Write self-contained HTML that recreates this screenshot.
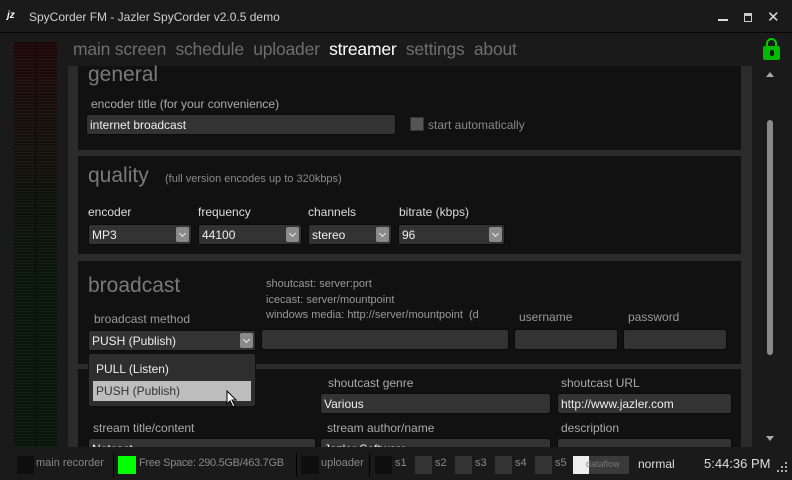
<!DOCTYPE html>
<html><head><meta charset="utf-8"><style>
*{margin:0;padding:0;box-sizing:border-box}
body{width:792px;height:480px;background:#1a1a1a;font-family:"Liberation Sans","DejaVu Sans",sans-serif;position:relative;overflow:hidden;color:#ccc}
.a{position:absolute;white-space:nowrap}
.lbl{font-size:12px;color:#b8b8b8}
.dim{font-size:11px;color:#8a8a8a}
.h{font-size:21px;color:#7a7a7a}
.in{position:absolute;background:#333;border:1px solid #0a0a0a;border-radius:3px;font-size:12px;color:#eee;padding:3px 0 0 3px;height:21px}
.sel{position:absolute;background:#333;border:1px solid #0a0a0a;border-radius:3px;font-size:12px;color:#eee;padding:3px 0 0 3px;height:21px}
.sel i{position:absolute;right:2px;top:2px;width:13px;height:15px;background:#8a8a8a;border-radius:2px}
.sel i:after{content:"";position:absolute;left:4px;top:4px;width:4px;height:4px;border-right:1.5px solid #eee;border-bottom:1.5px solid #eee;transform:rotate(45deg)}
.sec{position:absolute;left:78px;width:663px;background:#111}
.st{position:absolute;top:456px;height:18px;background:#0e0e0e}
.sl{position:absolute;top:457px;font-size:11px;color:#888}
</style></head><body>
<div class="a" style="left:0;top:32px;width:792px;height:1px;background:#050505"></div>
<div class="a" style="left:7px;top:10px;font-size:10px;font-weight:bold;font-style:italic;color:#fff">jz</div>
<div class="a" style="left:29px;top:10px;font-size:12px;color:#cfcfcf">SpyCorder FM - Jazler SpyCorder v2.0.5 demo</div>
<div class="a" style="left:718px;top:19px;width:10px;height:2px;background:#ddd"></div>
<div class="a" style="left:744px;top:13px;width:8px;height:9px;border:1.5px solid #ccc;border-top-width:3px"></div>
<div class="a" style="left:767px;top:8px;font-size:15px;color:#ddd">✕</div>
<div class="a" style="left:14px;top:42px;width:43px;height:405px;background:repeating-linear-gradient(#0d0d0d 0 2px,#1b1b1b 2px 3px),#111"></div>
<div class="a" style="left:14px;top:42px;width:43px;height:405px;background:linear-gradient(rgba(60,0,0,.35),rgba(40,30,0,.25) 25%,rgba(0,40,0,.3) 60%,rgba(0,40,0,.3));"></div>
<div class="a" style="left:35px;top:42px;width:1px;height:405px;background:#0a0a0a"></div>
<div class="a" style="left:73px;top:39px;font-size:17.5px;color:#6e6e6e;letter-spacing:-0.2px">main screen&nbsp; schedule&nbsp; uploader&nbsp; <span style="color:#fff">streamer</span>&nbsp; settings&nbsp; about</div>
<div class="a" style="left:766px;top:38px;width:11px;height:10px;border:2px solid #0c0;border-bottom:none;border-radius:6px 6px 0 0"></div>
<div class="a" style="left:763px;top:46px;width:17px;height:14px;background:#0b0;border-radius:2px"></div>
<div class="a" style="left:770px;top:50px;width:4px;height:6px;background:#111;border-radius:2px"></div>
<div class="a" style="left:766px;top:72px;width:0;height:0;border:4px solid transparent;border-bottom:5px solid #aaa;border-top:none"></div>
<div class="a" style="left:767px;top:120px;width:6px;height:235px;background:#8a8a8a;border-radius:3px"></div>
<div class="a" style="left:766px;top:436px;width:0;height:0;border:4px solid transparent;border-top:5px solid #aaa;border-bottom:none"></div>
<div class="a" style="left:68px;top:66px;width:684px;height:381px;background:#2b2b2b"></div>
<div class="sec" style="top:66px;height:84px"></div>
<div class="sec" style="top:156px;height:98px"></div>
<div class="sec" style="top:261px;height:103px"></div>
<div class="sec" style="top:369px;height:78px"></div>
<div class="a h" style="left:88px;top:63px">general</div>
<div class="a lbl" style="left:91px;top:97px;color:#aaa">encoder title (for your convenience)</div>
<div class="in" style="left:86px;top:114px;width:310px">internet broadcast</div>
<div class="a" style="left:410px;top:117px;width:14px;height:14px;background:#555;border:1px solid #333"></div>
<div class="a lbl" style="left:428px;top:118px;color:#888">start automatically</div>
<div class="a h" style="left:88px;top:164px">quality</div>
<div class="a dim" style="left:165px;top:173px">(full version encodes up to 320kbps)</div>
<div class="a lbl" style="left:88px;top:205px;color:#ddd">encoder</div>
<div class="a lbl" style="left:198px;top:205px;color:#ddd">frequency</div>
<div class="a lbl" style="left:308px;top:205px;color:#ddd">channels</div>
<div class="a lbl" style="left:399px;top:205px;color:#ddd">bitrate (kbps)</div>
<div class="sel" style="left:88px;top:224px;width:104px">MP3<i></i></div>
<div class="sel" style="left:198px;top:224px;width:104px">44100<i></i></div>
<div class="sel" style="left:308px;top:224px;width:84px">stereo<i></i></div>
<div class="sel" style="left:398px;top:224px;width:107px">96<i></i></div>
<div class="a h" style="left:88px;top:274px">broadcast</div>
<div class="a lbl" style="left:94px;top:312px;color:#999">broadcast method</div>
<div class="a dim" style="left:266px;top:277px;font-size:11px;line-height:15.5px;color:#999">shoutcast: server:port<br>icecast: server/mountpoint<br>windows media: http://server/mountpoint &nbsp;(d</div>
<div class="a lbl" style="left:519px;top:310px;color:#999">username</div>
<div class="a lbl" style="left:628px;top:310px;color:#999">password</div>
<div class="sel" style="left:88px;top:330px;width:168px">PUSH (Publish)<i></i></div>
<div class="in" style="left:261px;top:329px;width:248px"></div>
<div class="in" style="left:514px;top:329px;width:104px"></div>
<div class="in" style="left:623px;top:329px;width:104px"></div>
<div class="a lbl" style="left:328px;top:376px;color:#aaa">shoutcast genre</div>
<div class="a lbl" style="left:561px;top:376px;color:#aaa">shoutcast URL</div>
<div class="in" style="left:320px;top:393px;width:231px">Various</div>
<div class="in" style="left:557px;top:393px;width:175px">http://www.jazler.com</div>
<div class="a lbl" style="left:93px;top:421px;color:#aaa">stream title/content</div>
<div class="a lbl" style="left:327px;top:421px;color:#aaa">stream author/name</div>
<div class="a lbl" style="left:561px;top:421px;color:#aaa">description</div>
<div class="in" style="left:88px;top:438px;width:228px">Netcast</div>
<div class="in" style="left:320px;top:438px;width:231px">Jazler Software</div>
<div class="in" style="left:557px;top:438px;width:175px"></div>
<div class="a" style="left:88px;top:353px;width:168px;height:54px;background:#2e2e2e;border:1px solid #111;border-radius:3px"></div>
<div class="a" style="left:96px;top:362px;font-size:12px;color:#eee">PULL (Listen)</div>
<div class="a" style="left:93px;top:381px;width:158px;height:20px;background:#bdbdbd"></div>
<div class="a" style="left:96px;top:384px;font-size:12px;color:#333">PUSH (Publish)</div>
<svg class="a" style="left:226px;top:390px" width="12" height="18"><path d="M1 1 L1 14 L4 11 L7 17 L9 16 L6 10 L10 10 Z" fill="#fff" stroke="#000" stroke-width="1"/></svg>
<div class="a" style="left:0;top:447px;width:792px;height:33px;background:#1a1a1a"></div>
<div class="st" style="left:17px;width:17px"></div><div class="sl" style="left:36px">main recorder</div>
<div class="a" style="left:113px;top:453px;width:1px;height:24px;background:#000"></div>
<div class="a" style="left:118px;top:456px;width:18px;height:18px;background:#00ff00"></div>
<div class="sl" style="left:139px;letter-spacing:-0.3px">Free Space: 290.5GB/463.7GB</div>
<div class="a" style="left:296px;top:453px;width:1px;height:24px;background:#000"></div>
<div class="st" style="left:301px;width:18px"></div><div class="sl" style="left:321px">uploader</div>
<div class="a" style="left:369px;top:453px;width:1px;height:24px;background:#000"></div>
<div class="st" style="left:375px;width:17px"></div><div class="sl" style="left:395px">s1</div>
<div class="st" style="left:415px;width:17px;background:#333"></div><div class="sl" style="left:435px">s2</div>
<div class="st" style="left:455px;width:17px;background:#333"></div><div class="sl" style="left:475px">s3</div>
<div class="st" style="left:495px;width:17px;background:#333"></div><div class="sl" style="left:515px">s4</div>
<div class="st" style="left:535px;width:17px;background:#333"></div><div class="sl" style="left:555px">s5</div>
<div class="st" style="left:573px;width:16px;background:#eee"></div>
<div class="st" style="left:589px;width:40px;background:#3a3a3a"></div>
<div class="a" style="left:586px;top:459px;font-size:9px;color:#777">dataflow</div>
<div class="a" style="left:638px;top:457px;font-size:12px;color:#ddd">normal</div>
<div class="a" style="left:704px;top:456px;font-size:13px;color:#ddd">5:44:36 PM</div>
<svg class="a" style="left:777px;top:462px" width="12" height="12" fill="#aaa"><rect x="8" y="0" width="2" height="2"/><rect x="4" y="4" width="2" height="2"/><rect x="8" y="4" width="2" height="2"/><rect x="0" y="8" width="2" height="2"/><rect x="4" y="8" width="2" height="2"/><rect x="8" y="8" width="2" height="2"/></svg>
</body></html>
